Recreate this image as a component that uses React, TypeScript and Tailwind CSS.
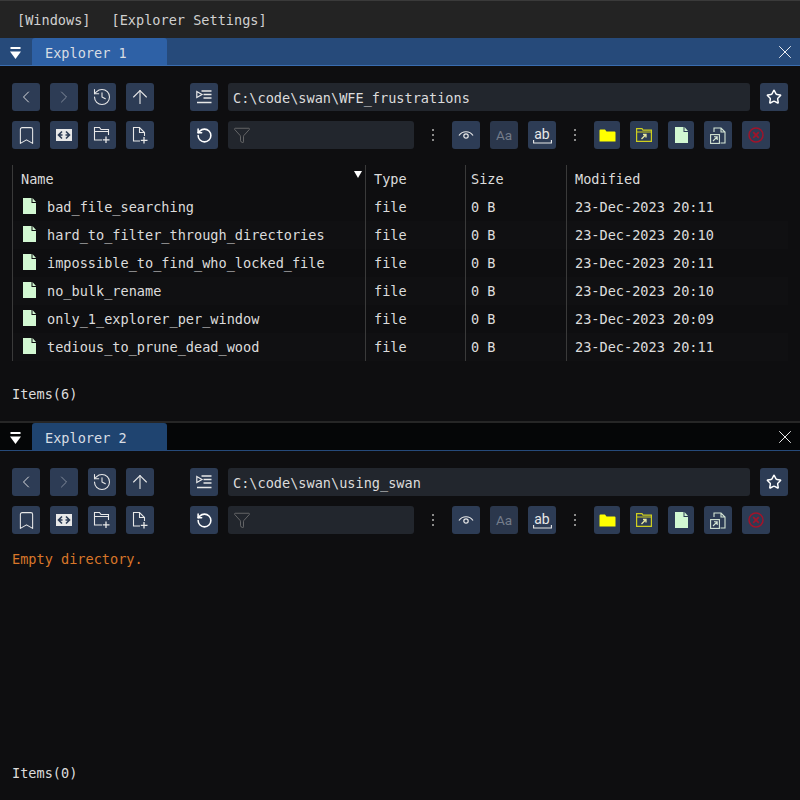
import React from 'react';
import { ChevronLeft, ChevronRight, History, ArrowUp, Bookmark, Star, RotateCcw, Funnel, X } from 'lucide-react';

const FILES = [
  { name: 'bad_file_searching', time: '20:11' },
  { name: 'hard_to_filter_through_directories', time: '20:10' },
  { name: 'impossible_to_find_who_locked_file', time: '20:11' },
  { name: 'no_bulk_rename', time: '20:10' },
  { name: 'only_1_explorer_per_window', time: '20:09' },
  { name: 'tedious_to_prune_dead_wood', time: '20:11' },
];

function Btn({ children, narrow, dim }: { children: React.ReactNode; narrow?: boolean; dim?: boolean }) {
  return (
    <div
      className={`flex h-7 shrink-0 items-center justify-center rounded-[3px] ${narrow ? 'w-[26px]' : 'w-7'} ${
        dim ? 'bg-[#2b374c]' : 'bg-[#2d3c55]'
      }`}
    >
      {children}
    </div>
  );
}

function Dots() {
  return (
    <div className="flex w-[18px] shrink-0 flex-col items-center gap-[3px]">
      <div className="h-[2px] w-[2px] bg-[#8a8a8a]" />
      <div className="h-[2px] w-[2px] bg-[#8a8a8a]" />
      <div className="h-[2px] w-[2px] bg-[#8a8a8a]" />
    </div>
  );
}

function FileGlyph({ className }: { className?: string }) {
  return (
    <svg width="13" height="16" viewBox="0 0 13 16" className={className}>
      <path d="M0 0H8.5V5H13V16H0Z" fill="#d2f8d2" />
      <path d="M9.5 0L13 4H9.5Z" fill="#d2f8d2" />
    </svg>
  );
}

function Toolbar({ path }: { path: string }) {
  const iconCls = 'text-[#e8e8e8]';
  return (
    <div className="flex flex-col gap-[10px]">
      <div className="flex items-center">
        <div className="flex gap-[10px]">
          <Btn>
            <ChevronLeft size={20} strokeWidth={1.1} className={iconCls} />
          </Btn>
          <Btn>
            <ChevronRight size={20} strokeWidth={1.1} className="text-[#8a93a2]" />
          </Btn>
          <Btn>
            <History size={20} strokeWidth={1.3} className={iconCls} />
          </Btn>
          <Btn>
            <ArrowUp size={22} strokeWidth={1.2} className={iconCls} />
          </Btn>
        </div>
        <div className="ml-9">
          <Btn>
            <svg width="16" height="14" viewBox="0 0 16 14" fill="none" stroke="#e8e8e8" strokeWidth="1.2">
              <path d="M0.8 1.5V7.5L6 4.5Z" />
              <path d="M5.5 1H15.5M7.5 4.5H15.5M7.5 8H15.5M1 12.5H15.5" strokeWidth="1.4" />
            </svg>
          </Btn>
        </div>
        <div className="ml-[10px] flex h-7 w-[522px] items-center rounded-[3px] bg-[#22262d] px-[5px] pt-[2px] text-[#dcdcdc]">
          {path}
        </div>
        <div className="ml-[10px]">
          <Btn>
            <Star size={16} strokeWidth={2.2} className="text-white" />
          </Btn>
        </div>
      </div>
      <div className="flex items-center">
        <div className="flex gap-[10px]">
          <Btn>
            <Bookmark size={21} strokeWidth={1.2} className={iconCls} />
          </Btn>
          <Btn>
            <svg width="16" height="12" viewBox="0 0 16 12">
              <rect width="16" height="12" fill="#e8e8e8" />
              <path d="M6 2.5L2.5 6L6 9.5M10 2.5L13.5 6L10 9.5M3 6H6.5M9.5 6H13" fill="none" stroke="#2d3c55" strokeWidth="1.6" />
            </svg>
          </Btn>
          <Btn>
            <svg width="18" height="18" viewBox="0 0 18 18" fill="none" stroke="#e8e8e8" strokeWidth="1.1">
              <path d="M9 14H1.5V1.5H6.5L8 3.5H15.5V9M1.5 5.5H15.5" />
              <path d="M13 10.5V17M9.8 13.8H16.5" strokeWidth="1.3" />
            </svg>
          </Btn>
          <Btn>
            <svg width="18" height="18" viewBox="0 0 18 18" fill="none" stroke="#e8e8e8" strokeWidth="1.1">
              <path d="M9 15H2.5V1.5H8.5L13.5 6.5V10M8.5 1.5V6.5H13.5" />
              <path d="M13 11V17.5M9.8 14.3H16.5" strokeWidth="1.3" />
            </svg>
          </Btn>
        </div>
        <div className="ml-9">
          <Btn>
            <RotateCcw size={17} strokeWidth={2.2} className="text-white" />
          </Btn>
        </div>
        <div className="ml-[10px] flex h-7 w-[186px] items-center rounded-[3px] bg-[#22262d] px-[5px]">
          <Funnel size={18} strokeWidth={1} className="text-[#7a7a7a]" />
        </div>
        <div className="ml-[10px]">
          <Dots />
        </div>
        <div className="ml-[10px] flex gap-[10px]">
          <Btn>
            <svg width="16" height="12" viewBox="0 0 16 12" fill="none" stroke="#e8e8e8" strokeWidth="1.2">
              <path d="M1 6.5C4.5 1.5 11.5 1.5 15 6.5" />
              <circle cx="8" cy="7" r="2.2" />
            </svg>
          </Btn>
          <Btn dim>
            <span className="font-['Roboto',sans-serif] text-[13.5px] text-[#747c8a]">Aa</span>
          </Btn>
          <Btn>
            <div className="flex flex-col items-center pt-[1px]">
              <span className="font-['Roboto',sans-serif] text-[14px] leading-[12px] text-[#e8e8e8]">ab</span>
              <svg width="19" height="4" viewBox="0 0 19 4" fill="none" stroke="#e8e8e8" strokeWidth="1.1">
                <path d="M0.6 0V3H18.4V0" />
              </svg>
            </div>
          </Btn>
        </div>
        <div className="ml-[10px]">
          <Dots />
        </div>
        <div className="ml-[10px] flex gap-[10px]">
          <Btn narrow>
            <svg width="17" height="13" viewBox="0 0 17 13">
              <path d="M0.5 1.5Q0.5 0.5 1.5 0.5H6L7.5 2.5H15.5Q16.5 2.5 16.5 3.5V12.5H0.5Z" fill="#ffff00" />
            </svg>
          </Btn>
          <Btn>
            <svg width="16" height="14" viewBox="0 0 16 14" fill="none" stroke="#cfcf1f" strokeWidth="1.2">
              <path d="M0.6 13.4V0.6H6L7 2.2H15.4V13.4ZM0.6 4H15.4" />
              <path d="M5.5 11L9.5 7M7 6.5H10V9.5" stroke="#e8e8a0" strokeWidth="1.3" />
            </svg>
          </Btn>
          <Btn narrow>
            <FileGlyph />
          </Btn>
          <Btn>
            <svg width="16" height="17" viewBox="0 0 16 17" fill="none" stroke="#d5e5d5" strokeWidth="1.1">
              <path d="M4 5V1H11L15 5V16H10.5M11 1V5H15" />
              <rect x="0.6" y="7.6" width="8.8" height="8.8" />
              <path d="M3 14L7 10M4 9.8H7.2V13" />
            </svg>
          </Btn>
          <Btn>
            <svg width="16" height="16" viewBox="0 0 16 16" fill="none" stroke="#a0142a" strokeWidth="1.5">
              <circle cx="8" cy="8" r="7" />
              <path d="M5.2 5.2L10.8 10.8M10.8 5.2L5.2 10.8" strokeWidth="1.8" />
            </svg>
          </Btn>
        </div>
      </div>
    </div>
  );
}

function TabBar({ title, active }: { title: string; active?: boolean }) {
  return (
    <div
      className={`flex h-7 shrink-0 items-end border-b ${
        active ? 'border-[#3a6db0] bg-[#264a7a]' : 'border-[#264a7a] bg-[#050607]'
      }`}
    >
      <div className="flex h-[27px] w-8 items-center justify-center pr-[2px] pt-[2px]">
        <svg width="11" height="12" viewBox="0 0 11 12" fill="#ffffff">
          <rect x="0.5" y="0" width="10" height="2" />
          <path d="M0 4.5H11L5.5 12Z" />
        </svg>
      </div>
      <div
        className={`flex h-[27px] w-[135px] items-center rounded-t-[3px] pl-[13px] pt-1 text-[#d8dde4] ${
          active ? 'bg-[#2e61a6]' : 'bg-[#1f4470]'
        }`}
      >
        {title}
      </div>
      <div className="flex h-[27px] flex-1 items-center justify-end pr-[4px]">
        <X size={22} strokeWidth={1} className="text-white" />
      </div>
    </div>
  );
}

function Cell({ children, className }: { children: React.ReactNode; className?: string }) {
  return <div className={`flex h-7 items-center border-l border-[#3a3a3a] pl-2 pt-[1px] ${className ?? ''}`}>{children}</div>;
}

function FileTable() {
  return (
    <div className="mt-4 grid grid-cols-[353px_100px_101px_222px] text-[#dcdcdc]">
      <Cell className="relative">
        Name
        <svg width="8" height="7" viewBox="0 0 8 7" className="absolute right-[3px] top-[6px]" fill="#ffffff">
          <path d="M0 0H8L4 7Z" />
        </svg>
      </Cell>
      <Cell>Type</Cell>
      <Cell className="pl-[5px]">Size</Cell>
      <Cell>Modified</Cell>
      {FILES.map((f, i) => (
        <React.Fragment key={f.name}>
          <Cell className={i % 2 === 1 ? 'bg-[#101012]' : ''}>
            <FileGlyph className="mr-[11px] ml-[2px] -translate-y-[2px]" />
            {f.name}
          </Cell>
          <Cell className={i % 2 === 1 ? 'bg-[#101012]' : ''}>file</Cell>
          <Cell className={`pl-[5px] ${i % 2 === 1 ? 'bg-[#101012]' : ''}`}>0 B</Cell>
          <Cell className={i % 2 === 1 ? 'bg-[#101012]' : ''}>23-Dec-2023 {f.time}</Cell>
        </React.Fragment>
      ))}
    </div>
  );
}

function Explorer({
  title,
  path,
  active,
  footer,
  children,
  className,
}: {
  title: string;
  path: string;
  active?: boolean;
  footer: string;
  children: React.ReactNode;
  className?: string;
}) {
  return (
    <div className={`flex flex-col ${className ?? ''}`}>
      <TabBar title={title} active={active} />
      <div className="flex flex-1 flex-col px-3 pt-[17px]">
        <Toolbar path={path} />
        {children}
        <div className="mt-auto pb-[18px] leading-[18px] text-[#dcdcdc]">{footer}</div>
      </div>
    </div>
  );
}

export default function App() {
  return (
    <div className="flex h-[800px] w-[800px] flex-col overflow-hidden bg-[#0e0e10] font-['DejaVu_Sans_Mono',monospace] text-[13.57px]">
      <div className="flex h-[38px] shrink-0 items-center gap-[21px] border-t border-[#3a3a3a] bg-[#232323] pl-[17px] pt-[2px] text-[#d0d0d0]">
        <span>[Windows]</span>
        <span>[Explorer Settings]</span>
      </div>
      <Explorer title="Explorer 1" path="C:\code\swan\WFE_frustrations" active footer="Items(6)" className="h-[383px] shrink-0">
        <FileTable />
      </Explorer>
      <div className="h-[2px] shrink-0 bg-[#262626]" />
      <Explorer title="Explorer 2" path="C:\code\swan\using_swan" footer="Items(0)" className="flex-1">
        <div className="mt-[2px] pt-[14px] leading-[18px] text-[#d9772a]">Empty directory.</div>
      </Explorer>
    </div>
  );
}
